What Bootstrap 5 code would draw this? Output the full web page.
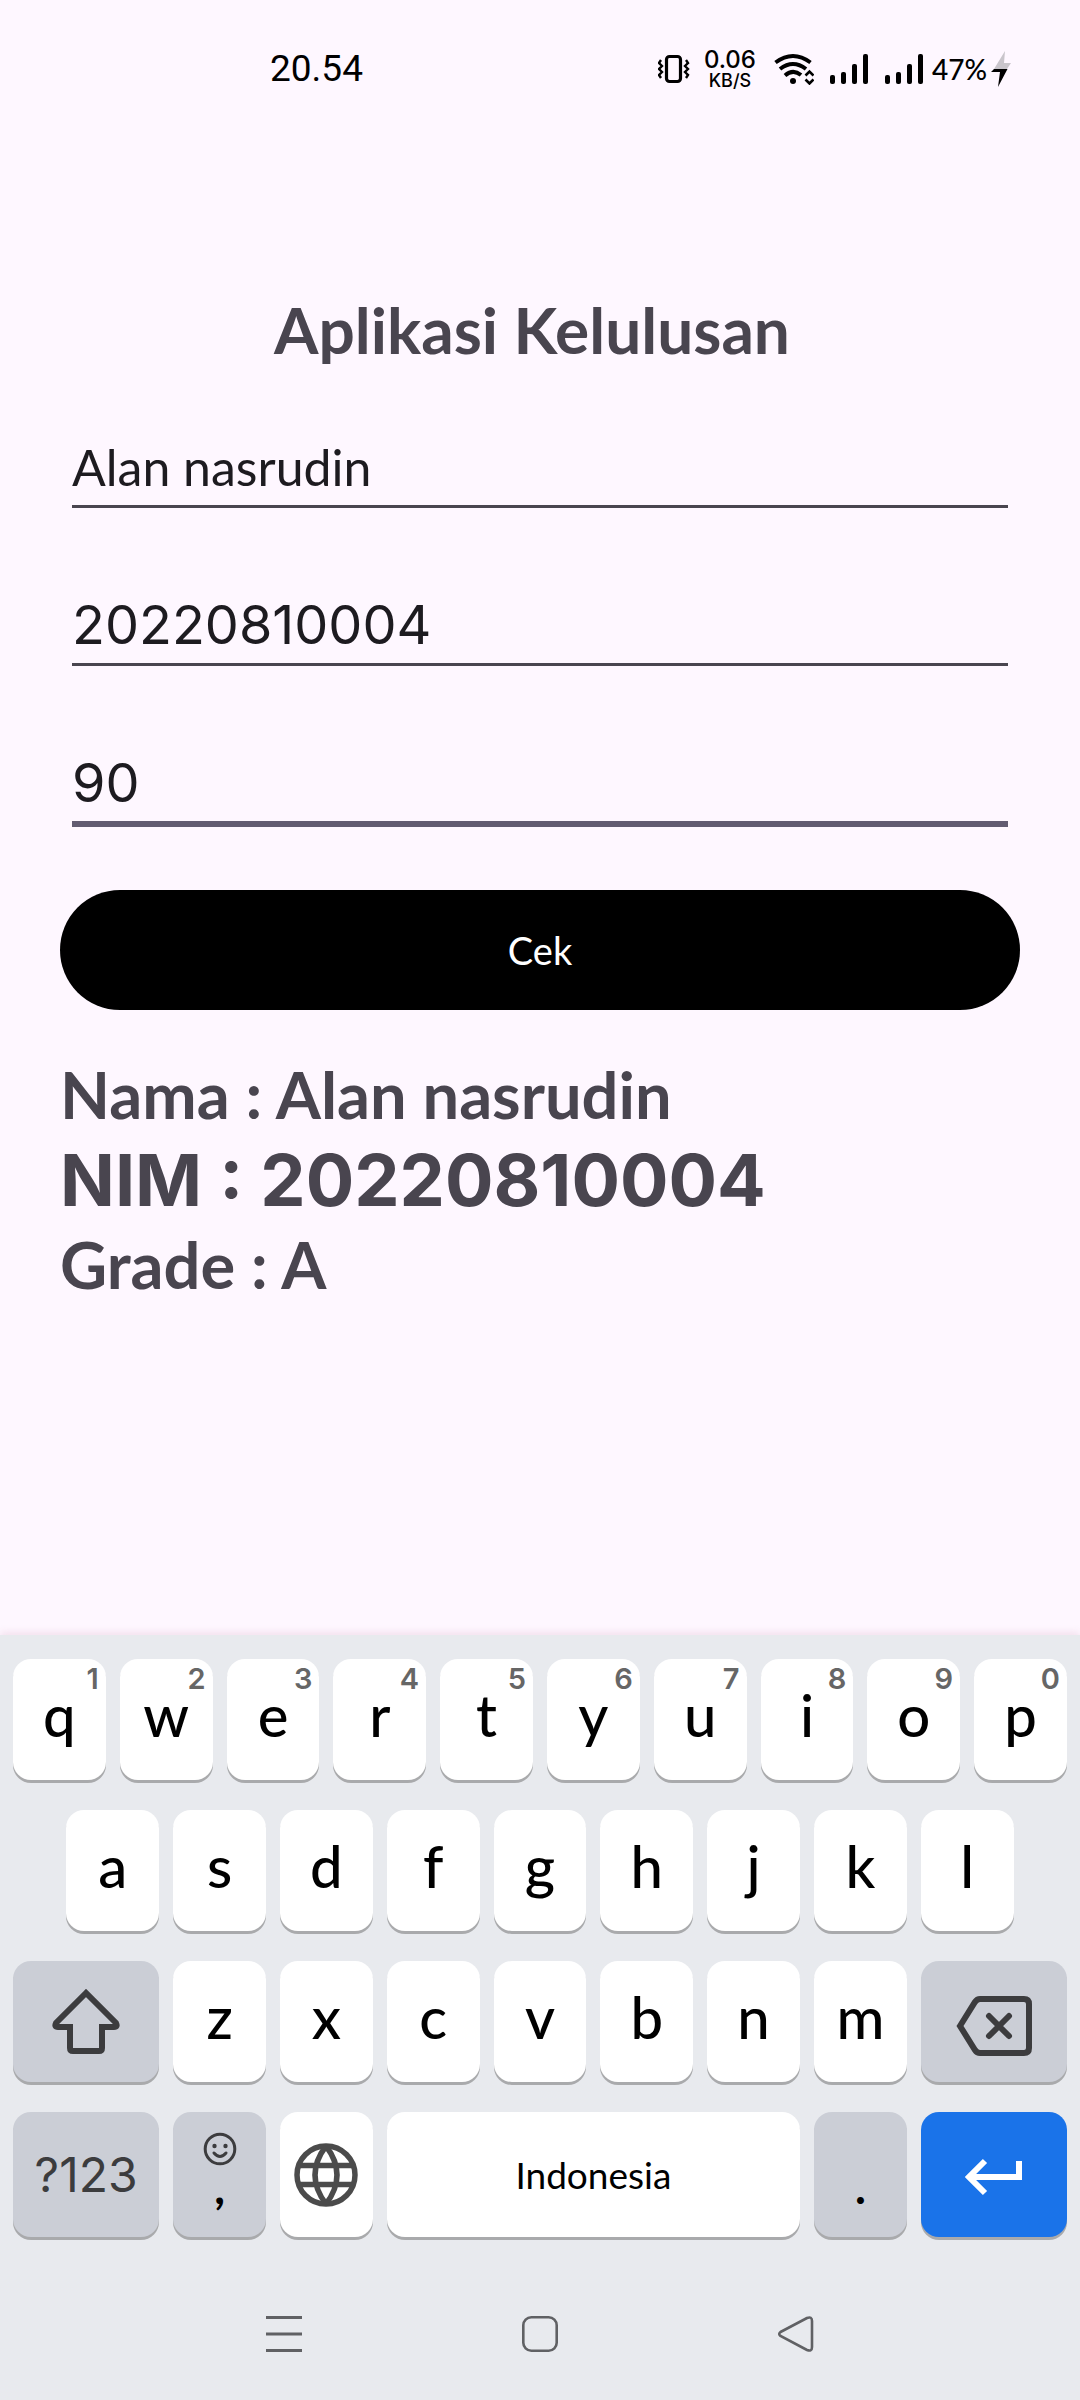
<!DOCTYPE html>
<html lang="id">
<head>
<meta charset="utf-8">
<meta name="viewport" content="width=device-width, initial-scale=1">
<title>Aplikasi Kelulusan</title>
<link href="https://cdn.jsdelivr.net/npm/bootstrap@5.3.0/dist/css/bootstrap.min.css" rel="stylesheet">
<style>
body{background:#fef7ff;color:#49454f;font-family:Lato,"Open Sans",sans-serif}
svg{display:block;flex:none}
.figures{font-family:Inter,Roboto,sans-serif}
.statusbar{height:138px;padding-left:25%;padding-right:69px;color:#000}
.clock{font:400 37px/40px Roboto,sans-serif}
.speed{font-family:Inter,sans-serif;width:56px;margin-left:12px}
.speed-num{font-size:24px;line-height:24px}
.speed-unit{font-size:18px;line-height:18px}
.battery{font:500 28px/32px Lato,sans-serif}
.app{padding:142px 60px 0}
.heading{font-size:64px;line-height:100px;padding-right:16px}
.entry{display:block;width:100%;height:80px;background:transparent;border:0;border-bottom:3px solid #49454f;border-radius:0;padding:0;color:#1d1b20;font-size:50px;line-height:60px;outline:0}
.entry.figures{font-size:54px}
.entry-active{border-bottom:6px solid #625b71;height:83px}
.fields{padding:48px 12px 0;gap:78px}
.check{height:120px;font-size:38px;background:#000;color:#fff;margin-top:63px}
.check:hover{background:#222;color:#fff}
.result{font-size:65px;line-height:85px;margin-top:42px}
.result .figures{font-size:72px}
.keyboard{background:#e8eaee;padding:24px 6px 0;box-shadow:0 -2px 8px rgba(190,120,150,.2)}
.krow{margin-bottom:27px}
.slot{width:10%;padding:0 7px 3px}
.slot-wide{width:15%}
.slot-space{width:40%}
.keycap{position:relative;width:100%;height:121px;border:0;border-radius:18px;background:#fff;color:#000;padding:0 0 10px;box-shadow:0 3px 0 #a9aaac;font-size:58px;line-height:72px;font-weight:500;display:flex;align-items:center;justify-content:center}
.krow-last .keycap{height:125px}
.keycap-mod{background:#cbced6;color:#3c3c3e}
.keycap-icon{padding:0}
.keycap-enter{background:#1a73e9;color:#fff}
.hint{position:absolute;top:4px;right:7px;font:600 29px/32px Inter,sans-serif;color:#666}
.sym{font-size:48px;font-weight:400;padding:0}
.lang{font-size:37px;font-weight:400;padding:0}
.punct{color:#000;flex-direction:column;justify-content:flex-end;padding-bottom:29px;font-size:46px;line-height:42px;font-weight:700}
.navkeys{height:160px;padding-top:28px}
.navkey{width:24%;border:0;background:transparent;display:flex;justify-content:center;align-items:center;padding:0}
</style>
<script src="https://cdn.jsdelivr.net/npm/bootstrap@5.3.0/dist/js/bootstrap.bundle.min.js"></script>
</head>
<body class="min-vh-100 d-flex flex-column">
<header class="statusbar d-flex align-items-center justify-content-between">
  <div class="clock">20.54</div>
  <div class="d-flex align-items-center">
    <svg width="32" height="30" viewBox="0 0 32 30" fill="none" stroke="#000"><rect x="8.500" y="2.500" width="14" height="25" rx="3" stroke-width="3.200"/><path d="M3 6l-2 3 3 3-3 3 3 3-3 3 2 3M28 6l2 3-3 3 3 3-3 3 3 3-2 3" stroke-width="2.400"/></svg>
    <div class="speed text-center fw-medium me-3"><div class="speed-num">0.06</div><div class="speed-unit">KB/S</div></div>
    <svg class="me-3" width="40" height="32" viewBox="0 0 40 32" fill="none" stroke="#000" stroke-width="4"><path d="M1.500 9.500Q19 -3.500 36.500 9.500M6 16Q19 6 32 16M11 22.500Q19 15.500 27 22"/><circle cx="19" cy="28" r="3" fill="#000" stroke="none"/><path d="M31.500 22.500L35.500 18.500 39.500 22.500M31.500 26.500L35.500 30.500 39.500 26.500" stroke-width="2.600"/></svg>
    <svg class="me-3" width="39" height="32" viewBox="0 0 39 32"><g><rect y="22" width="5" height="9" rx="2"/><rect x="11" y="19" width="5" height="12" rx="2"/><rect x="22" y="11" width="5" height="20" rx="2"/><rect x="33" y="1" width="5" height="30" rx="2"/></g></svg>
    <svg class="me-2" width="39" height="32" viewBox="0 0 39 32"><g><rect y="22" width="5" height="9" rx="2"/><rect x="11" y="19" width="5" height="12" rx="2"/><rect x="22" y="11" width="5" height="20" rx="2"/><rect x="33" y="1" width="5" height="30" rx="2"/></g></svg>
    <div class="battery me-1">47%</div>
    <svg width="20" height="36" viewBox="0 0 20 36"><path d="M14 0L3 18H16L20 12H13z" fill="#c9c5cb"/><path d="M3 18L0 21H9L7 36 16.500 18z"/></svg>
  </div>
</header>

<main class="app">
  <h1 class="heading fw-bold text-center m-0">Aplikasi Kelulusan</h1>
  <form onsubmit="return false">
    <div class="fields d-flex flex-column">
      <input class="entry" type="text" value="Alan nasrudin" aria-label="Nama">
      <input class="entry figures" type="text" inputmode="numeric" value="20220810004" aria-label="NIM">
      <input class="entry figures entry-active" type="text" inputmode="numeric" value="90" aria-label="Nilai">
    </div>
    <button class="check btn rounded-pill w-100" type="submit">Cek</button>
  </form>
  <div class="result fw-bold">
    <div>Nama : Alan nasrudin</div>
    <div class="figures">NIM : 20220810004</div>
    <div>Grade : A</div>
  </div>
</main>

<footer class="keyboard mt-auto">
  <div class="krow d-flex">
    <div class="slot"><button class="keycap" type="button">q<span class="hint">1</span></button></div>
    <div class="slot"><button class="keycap" type="button">w<span class="hint">2</span></button></div>
    <div class="slot"><button class="keycap" type="button">e<span class="hint">3</span></button></div>
    <div class="slot"><button class="keycap" type="button">r<span class="hint">4</span></button></div>
    <div class="slot"><button class="keycap" type="button">t<span class="hint">5</span></button></div>
    <div class="slot"><button class="keycap" type="button">y<span class="hint">6</span></button></div>
    <div class="slot"><button class="keycap" type="button">u<span class="hint">7</span></button></div>
    <div class="slot"><button class="keycap" type="button">i<span class="hint">8</span></button></div>
    <div class="slot"><button class="keycap" type="button">o<span class="hint">9</span></button></div>
    <div class="slot"><button class="keycap" type="button">p<span class="hint">0</span></button></div>
  </div>
  <div class="krow d-flex justify-content-center">
    <div class="slot"><button class="keycap" type="button">a</button></div>
    <div class="slot"><button class="keycap" type="button">s</button></div>
    <div class="slot"><button class="keycap" type="button">d</button></div>
    <div class="slot"><button class="keycap" type="button">f</button></div>
    <div class="slot"><button class="keycap" type="button">g</button></div>
    <div class="slot"><button class="keycap" type="button">h</button></div>
    <div class="slot"><button class="keycap" type="button">j</button></div>
    <div class="slot"><button class="keycap" type="button">k</button></div>
    <div class="slot"><button class="keycap" type="button">l</button></div>
  </div>
  <div class="krow d-flex">
    <div class="slot slot-wide"><button class="keycap keycap-mod keycap-icon" type="button" aria-label="Shift"><svg width="68" height="66" viewBox="0 0 68 66" fill="none" stroke="currentColor" stroke-width="6"><path d="M34 4L4 34Q2 38 6 38H18V59Q18 62 21 62H47Q50 62 50 59V38H62Q66 38 64 34z"/></svg></button></div>
    <div class="slot"><button class="keycap" type="button">z</button></div>
    <div class="slot"><button class="keycap" type="button">x</button></div>
    <div class="slot"><button class="keycap" type="button">c</button></div>
    <div class="slot"><button class="keycap" type="button">v</button></div>
    <div class="slot"><button class="keycap" type="button">b</button></div>
    <div class="slot"><button class="keycap" type="button">n</button></div>
    <div class="slot"><button class="keycap" type="button">m</button></div>
    <div class="slot slot-wide"><button class="keycap keycap-mod keycap-icon pt-2" type="button" aria-label="Hapus"><svg width="76" height="60" viewBox="0 0 76 60" fill="none" stroke="currentColor" stroke-width="6"><path d="M4 30L19 6Q21 3 24 3H68Q73 3 73 8V52Q73 57 68 57H24Q21 57 19 54z"/><path d="M33 20L53 40M53 20L33 40" stroke-linecap="round"/></svg></button></div>
  </div>
  <div class="krow krow-last d-flex mb-0">
    <div class="slot slot-wide"><button class="keycap keycap-mod sym figures" type="button">?123</button></div>
    <div class="slot"><button class="keycap keycap-mod punct" type="button"><svg width="34" height="34" viewBox="0 0 34 34" fill="none" stroke="#3c3c3e" stroke-width="3"><circle cx="17" cy="17" r="14.800"/><path d="M11 21Q17 28 23 21" stroke-linecap="round"/><circle cx="11.500" cy="14" r="2.200" fill="#3c3c3e" stroke="none"/><circle cx="22.500" cy="14" r="2.200" fill="#3c3c3e" stroke="none"/></svg>,</button></div>
    <div class="slot"><button class="keycap keycap-icon" type="button" aria-label="Bahasa"><svg width="64" height="64" viewBox="0 0 64 64" fill="none" stroke="#4b4b4b" stroke-width="5.500"><circle cx="32" cy="32" r="29"/><path d="M5 22.500H59M5 41.500H59M32 3Q10 32 32 61M32 3Q54 32 32 61"/></svg></button></div>
    <div class="slot slot-space"><button class="keycap lang" type="button">Indonesia</button></div>
    <div class="slot"><button class="keycap keycap-mod punct" type="button">.</button></div>
    <div class="slot slot-wide"><button class="keycap keycap-enter keycap-icon pt-1" type="button" aria-label="Enter"><svg width="58" height="38" viewBox="0 0 58 38" fill="none" stroke="currentColor" stroke-width="6"><path d="M20 3L4 19 20 35M5 19H54V3"/></svg></button></div>
  </div>
  <nav class="navkeys d-flex justify-content-center align-items-center" aria-label="Navigasi">
    <button class="navkey" type="button" aria-label="Terbaru"><svg width="36" height="36" viewBox="0 0 36 36" stroke="#606164" stroke-width="3"><path d="M0 1.500H36M0 18H36M0 34.500H36"/></svg></button>
    <button class="navkey" type="button" aria-label="Beranda"><svg width="36" height="36" viewBox="0 0 36 36" fill="none" stroke="#606164" stroke-width="2.600"><rect x="1.300" y="1.300" width="33.400" height="33.400" rx="8"/></svg></button>
    <button class="navkey" type="button" aria-label="Kembali"><svg width="36" height="36" viewBox="0 0 36 36" fill="none" stroke="#606164" stroke-width="2.600"><path d="M2.500 16L29 2Q34 0 34 5V31Q34 36 29 34L2.500 20Q0 18 2.500 16z"/></svg></button>
  </nav>
</footer>
</body>
</html>
